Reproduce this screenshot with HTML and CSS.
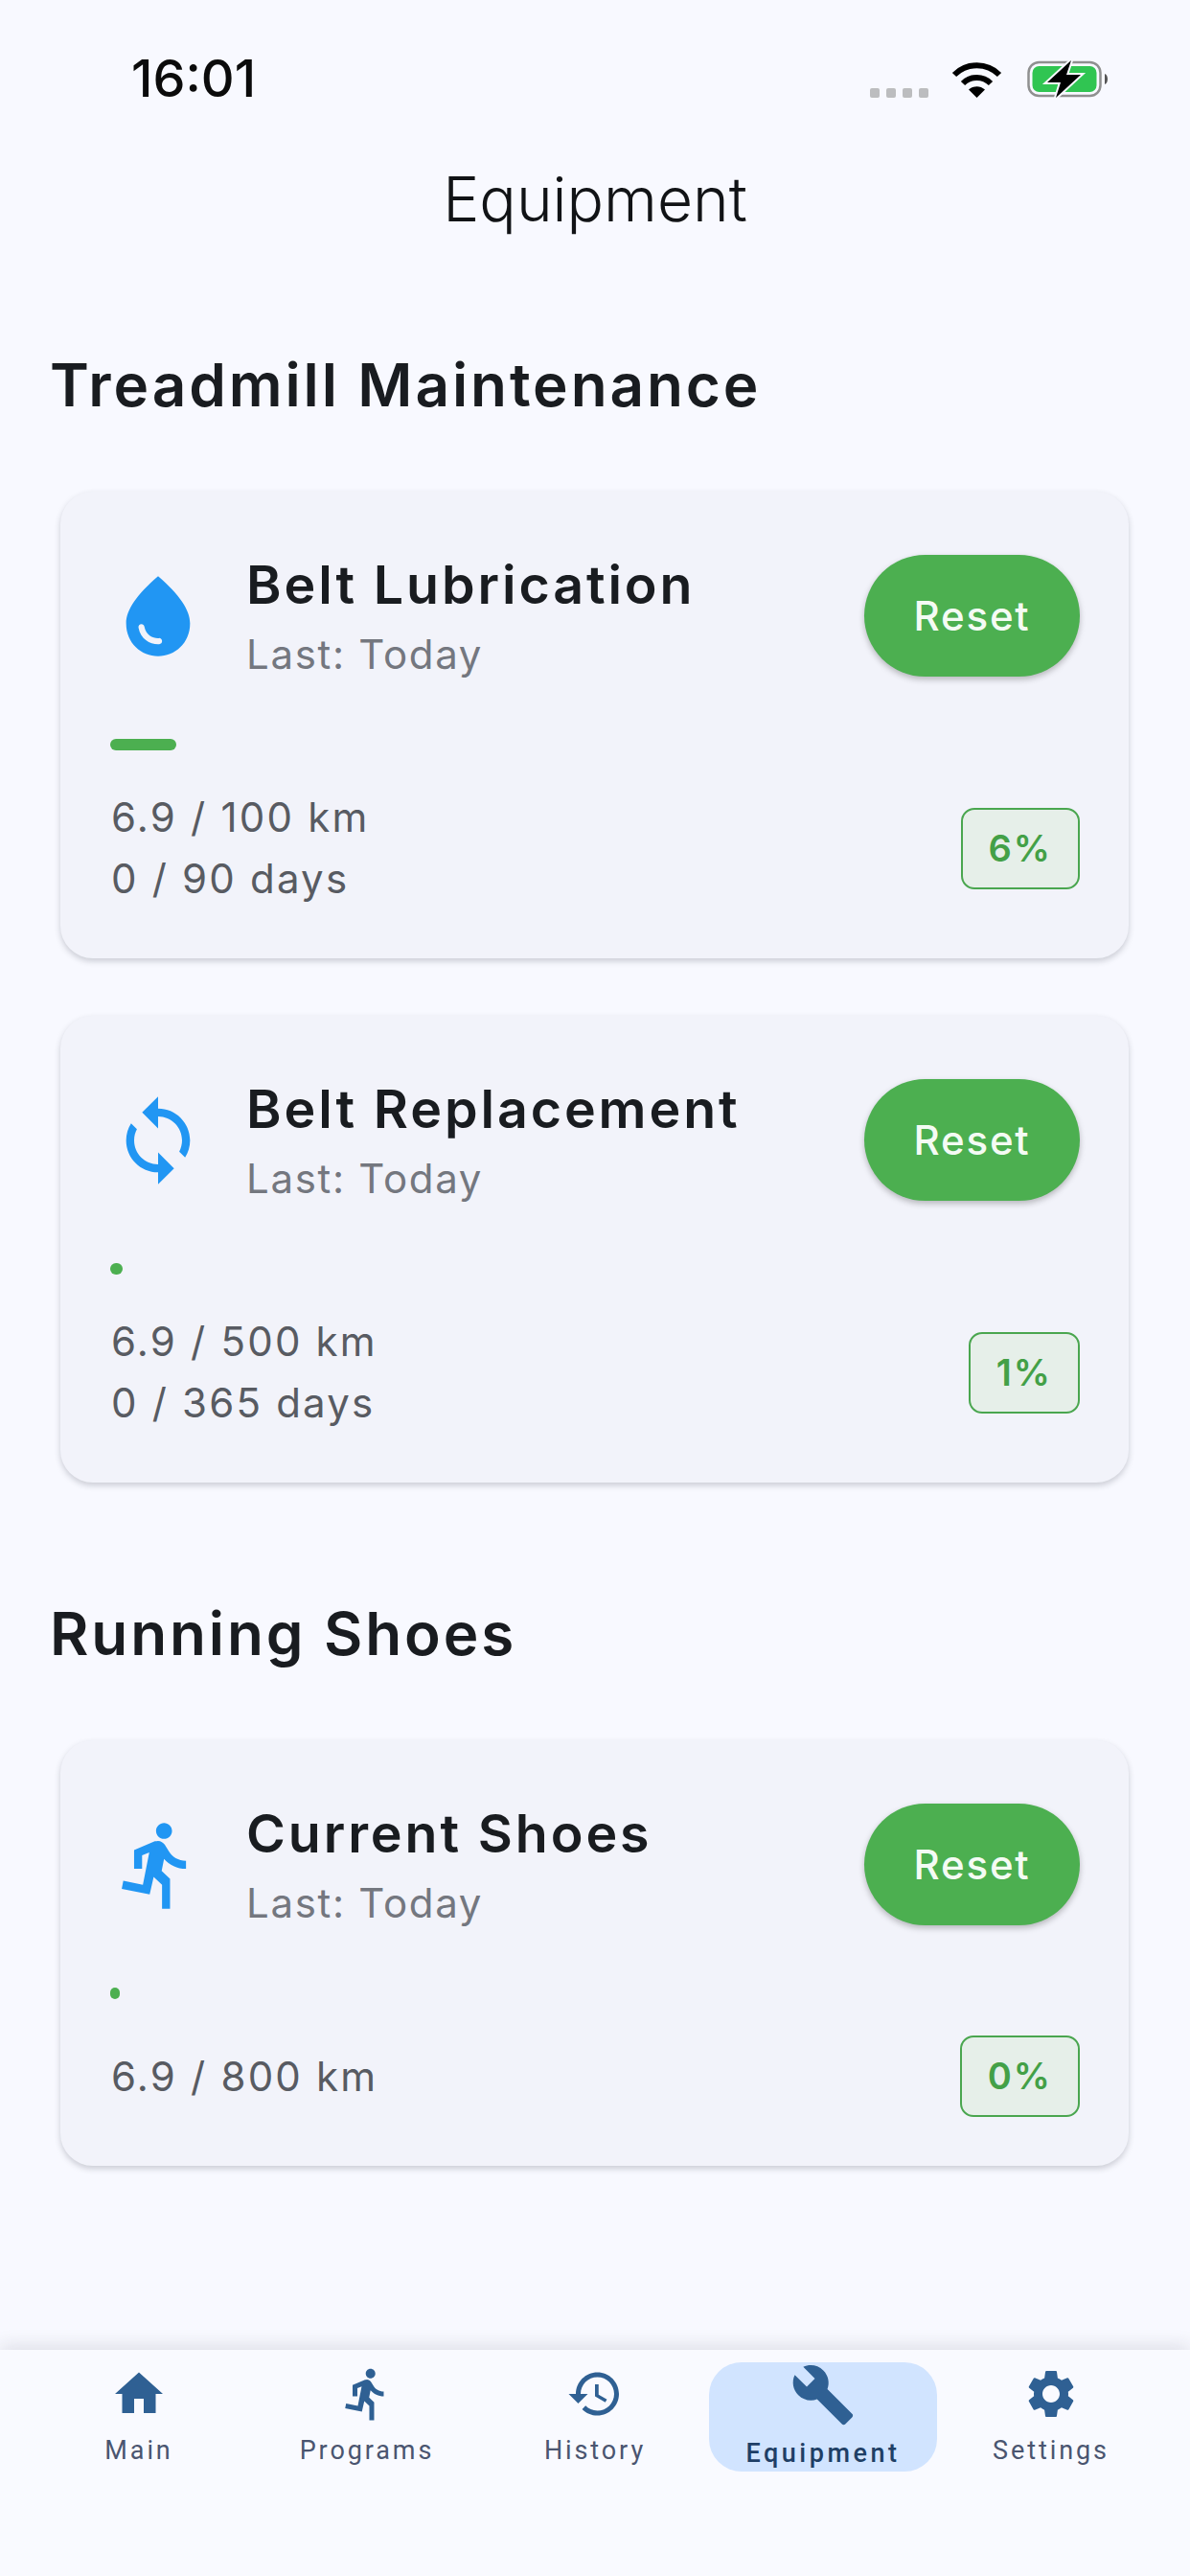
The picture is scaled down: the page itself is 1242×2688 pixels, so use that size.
FILE: index.html
```html
<!DOCTYPE html>
<html lang="en">
<head>
    <meta charset="UTF-8">
    <meta name="viewport" content="width=device-width, initial-scale=1.0">
    <title>Equipment</title>
    <link rel="stylesheet" href="styles.css">
</head>
<body>
    <div class="app">
        <div class="status-bar">
            <span class="status-time">16:01</span>
            <div class="status-icons">
                <div class="signal-dots"><i></i><i></i><i></i><i></i></div>
                <svg class="wifi-icon" viewBox="0 0 53 39">
                    <path d="M3 15C16 2 37 2 50 15" fill="none" stroke="#000" stroke-width="6"/>
                    <path d="M12 24C20 16 33 16 41 24" fill="none" stroke="#000" stroke-width="6"/>
                    <path d="M18 30.500C23 26 30 26 35 30.500L26.500 39z"/>
                </svg>
                <svg class="battery-icon" viewBox="0 0 85 39">
                    <rect x="1.500" y="2" width="75" height="35" rx="11" fill="none" stroke="#8f9090" stroke-width="2.500"/>
                    <rect x="5.500" y="6" width="67" height="27" rx="7" fill="#30c552"/>
                    <path d="M81 14c4 1 4 10 0 11z" fill="#555"/>
                    <path d="M46 0L21 23h14l-5 16 26-24H41z" stroke="#f8f9ff" stroke-width="4" paint-order="stroke"/>
                </svg>
            </div>
        </div>
        <h1 class="app-title">Equipment</h1>

        <main class="content">
            <h2 class="section-title">Treadmill Maintenance</h2>
            <div class="card">
                <div class="card-top">
                    <svg class="card-icon" viewBox="0 0 24 24"><path d="M12 2c-5.330 4.550-8 8.480-8 11.800 0 4.980 3.800 8.200 8 8.200s8-3.220 8-8.200c0-3.320-2.670-7.250-8-11.800zM7.830 14c.37 0 .67.26.74.62.41 2.220 2.280 2.980 3.640 2.870.43-.02.79.32.79.75 0 .4-.32.73-.72.75-2.130.13-4.620-1.090-5.190-4.120-.08-.45.28-.87.74-.87z"/></svg>
                    <div class="card-info">
                        <span class="card-name">Belt Lubrication</span>
                        <span class="card-last">Last: Today</span>
                    </div>
                    <button class="reset-btn">Reset</button>
                </div>
                <div class="progress-fill" style="width: 6.8%"></div>
                <div class="card-bottom">
                    <div class="metrics">
                        <span>6.9 / 100 km</span>
                        <span>0 / 90 days</span>
                    </div>
                    <span class="percent-badge">6%</span>
                </div>
            </div>
            <div class="card">
                <div class="card-top">
                    <svg class="card-icon" viewBox="0 0 24 24"><path d="M12 4V1L8 5l4 4V6c3.310 0 6 2.690 6 6 0 1.010-.25 1.970-.7 2.800l1.460 1.460C19.540 15.030 20 13.570 20 12c0-4.420-3.580-8-8-8zm0 14c-3.310 0-6-2.690-6-6 0-1.010.25-1.970.7-2.800L5.240 7.740C4.460 8.970 4 10.430 4 12c0 4.420 3.580 8 8 8v3l4-4-4-4v3z"/></svg>
                    <div class="card-info">
                        <span class="card-name">Belt Replacement</span>
                        <span class="card-last">Last: Today</span>
                    </div>
                    <button class="reset-btn">Reset</button>
                </div>
                <div class="progress-fill" style="width: 1.3%"></div>
                <div class="card-bottom">
                    <div class="metrics">
                        <span>6.9 / 500 km</span>
                        <span>0 / 365 days</span>
                    </div>
                    <span class="percent-badge">1%</span>
                </div>
            </div>

            <h2 class="section-title spaced">Running Shoes</h2>
            <div class="card">
                <div class="card-top">
                    <svg class="card-icon" viewBox="0 0 24 24"><path d="M13.490 5.480c1.100 0 2-.9 2-2s-.9-2-2-2-2 .9-2 2 .9 2 2 2zm-3.600 13.900l1-4.400 2.100 2v6h2v-7.500l-2.100-2 .6-3c1.300 1.500 3.300 2.500 5.500 2.500v-2c-1.900 0-3.500-1-4.300-2.400l-1-1.600c-.4-.6-1-1-1.700-1-.3 0-.5.1-.8.1l-5.200 2.200v4.700h2v-3.400l1.800-.7-1.600 8.100-4.900-1-.4 2 7 1.400z"/></svg>
                    <div class="card-info">
                        <span class="card-name">Current Shoes</span>
                        <span class="card-last">Last: Today</span>
                    </div>
                    <button class="reset-btn">Reset</button>
                </div>
                <div class="progress-fill" style="width: 0.9%"></div>
                <div class="card-bottom">
                    <div class="metrics">
                        <span>6.9 / 800 km</span>
                    </div>
                    <span class="percent-badge">0%</span>
                </div>
            </div>
        </main>

        <nav class="bottom-nav">
            <div class="nav-item">
                <svg class="nav-icon" viewBox="0 0 24 24"><path d="M10 20v-6h4v6h5v-8h3L12 3 2 12h3v8z"/></svg>
                <span class="nav-label">Main</span>
            </div>
            <div class="nav-item">
                <svg class="nav-icon" viewBox="0 0 24 24"><path d="M13.490 5.480c1.100 0 2-.9 2-2s-.9-2-2-2-2 .9-2 2 .9 2 2 2zm-3.600 13.900l1-4.400 2.100 2v6h2v-7.500l-2.100-2 .6-3c1.300 1.500 3.300 2.500 5.500 2.500v-2c-1.900 0-3.500-1-4.300-2.400l-1-1.600c-.4-.6-1-1-1.700-1-.3 0-.5.1-.8.1l-5.200 2.200v4.700h2v-3.400l1.800-.7-1.600 8.100-4.900-1-.4 2 7 1.400z"/></svg>
                <span class="nav-label">Programs</span>
            </div>
            <div class="nav-item">
                <svg class="nav-icon" viewBox="0 0 24 24"><path d="M13 3c-4.970 0-9 4.030-9 9H1l3.890 3.890.07.14L9 12H6c0-3.870 3.130-7 7-7s7 3.130 7 7-3.130 7-7 7c-1.930 0-3.680-.79-4.940-2.060l-1.420 1.420C8.270 19.990 10.510 21 13 21c4.970 0 9-4.030 9-9s-4.030-9-9-9zm-1 5v5l4.280 2.540.72-1.210-3.500-2.080V8H12z"/></svg>
                <span class="nav-label">History</span>
            </div>
            <div class="nav-item active">
                <svg class="nav-icon" viewBox="0 0 24 24"><path d="M22.700 19l-9.100-9.100c.9-2.300.4-5-1.500-6.900-2-2-5-2.400-7.400-1.300L9 6 6 9 1.600 4.700C.4 7.100.9 10.100 2.900 12.100c1.900 1.900 4.600 2.400 6.900 1.500l9.100 9.100c.4.4 1 .4 1.400 0l2.300-2.300c.5-.4.5-1.100.1-1.400z"/></svg>
                <span class="nav-label">Equipment</span>
            </div>
            <div class="nav-item">
                <svg class="nav-icon" viewBox="0 0 24 24"><path d="M19.140 12.940c.04-.3.06-.61.06-.94 0-.32-.02-.64-.07-.94l2.030-1.580c.18-.14.23-.41.12-.61l-1.920-3.320c-.12-.22-.37-.29-.59-.22l-2.390.96c-.5-.38-1.030-.7-1.620-.94l-.36-2.540c-.04-.24-.24-.41-.48-.41h-3.840c-.24 0-.43.17-.47.41l-.36 2.540c-.59.24-1.130.57-1.620.94l-2.390-.96c-.22-.08-.47 0-.59.22L2.740 8.870c-.12.21-.08.47.12.61l2.030 1.580c-.05.3-.09.63-.09.94s.02.64.07.94l-2.030 1.580c-.18.14-.23.41-.12.61l1.920 3.320c.12.22.37.29.59.22l2.390-.96c.5.38 1.030.7 1.620.94l.36 2.540c.05.24.24.41.48.41h3.840c.24 0 .44-.17.47-.41l.36-2.540c.59-.24 1.130-.56 1.620-.94l2.390.96c.22.08.47 0 .59-.22l1.920-3.320c.12-.22.07-.47-.12-.61l-2.010-1.580zM12 15.600c-1.980 0-3.600-1.620-3.600-3.600s1.620-3.600 3.600-3.600 3.600 1.620 3.600 3.600-1.620 3.600-3.600 3.600z"/></svg>
                <span class="nav-label">Settings</span>
            </div>
        </nav>
    </div>
</body>
</html>
```

FILE: styles.css
```css
body {
    margin: 0;
    background: #f8f9ff;
    color: #191c20;
    font-family: "Inter", "Noto Sans", sans-serif;
}
.app {
    display: flex;
    flex-direction: column;
    width: 1242px;
    height: 2688px;
    overflow: hidden;
}
.status-bar {
    display: flex;
    justify-content: space-between;
    align-items: flex-start;
    height: 130px;
    padding: 56px 85px 0 137px;
    box-sizing: border-box;
}
.status-time {
    font-size: 54px;
    font-weight: 500;
    line-height: 52px;
    color: #0b0b0b;
}
.status-icons {
    display: flex;
    align-items: flex-end;
    gap: 24px;
    margin-top: 7px;
}
.signal-dots {
    display: flex;
    gap: 7px;
}
.signal-dots i {
    width: 10px;
    height: 10px;
    border-radius: 2px;
    background: #bcbdbf;
}
.wifi-icon {
    width: 53px;
    height: 39px;
}
.battery-icon {
    width: 85px;
    height: 39px;
    margin-left: 2px;
}
.app-title {
    margin: 38px 0 0;
    font-size: 64px;
    font-weight: 300;
    line-height: 80px;
    text-align: center;
    color: #111316;
}
.content {
    flex: 1;
    padding: 0 64px 0 52px;
}
.section-title {
    margin: 114px 0 71px;
    font-size: 62px;
    font-weight: 600;
    line-height: 80px;
    letter-spacing: 2.9px;
}
.section-title.spaced {
    margin-top: 118px;
}
.card {
    margin: 0 0 60px 11px;
    padding: 66px 51px 51px 52px;
    background: #f2f3fa;
    border-radius: 34px;
    box-shadow: 0 3px 6px rgba(40, 44, 60, 0.22);
}
.card:last-child {
    margin-bottom: 0;
}
.card-top {
    display: flex;
    align-items: center;
    height: 127px;
    margin-bottom: 65px;
}
.card-icon {
    flex: none;
    width: 100px;
    height: 100px;
    margin-right: 42px;
    fill: #2196f3;
}
.card-info {
    flex: 1;
    display: flex;
    flex-direction: column;
    gap: 20px;
    padding-top: 2px;
}
.card-name {
    font-size: 55.500px;
    font-weight: 600;
    line-height: 58px;
    letter-spacing: 2.9px;
}
.card-last {
    font-size: 42px;
    line-height: 48px;
    letter-spacing: 1.7px;
    color: #74777f;
}
.reset-btn {
    flex: none;
    width: 225px;
    height: 127px;
    padding: 0;
    border: none;
    border-radius: 64px;
    background: #4caf50;
    color: #f4fbf4;
    font-family: inherit;
    font-size: 42px;
    font-weight: 500;
    letter-spacing: 1.8px;
    box-shadow: 0 3px 6px rgba(0, 0, 0, 0.25);
}
.progress-fill {
    height: 12px;
    min-width: 10px;
    border-radius: 6px;
    background: #4caf50;
}
.card-bottom {
    display: flex;
    justify-content: space-between;
    align-items: center;
    margin-top: 38px;
}
.metrics {
    display: flex;
    flex-direction: column;
    padding-left: 1px;
    font-size: 42px;
    line-height: 64px;
    letter-spacing: 2.2px;
    color: #585b62;
}
.percent-badge {
    padding: 0 27px;
    height: 85px;
    box-sizing: border-box;
    border: 2.500px solid #4aa64f;
    border-radius: 14px;
    background: #e6efe9;
    color: #43a047;
    font-size: 38px;
    font-weight: 600;
    line-height: 80px;
    letter-spacing: 2px;
}
.bottom-nav {
    display: grid;
    grid-template-columns: repeat(5, 238px);
    align-items: start;
    height: 236px;
    padding: 13px 26px 0;
    box-sizing: border-box;
    background: #f9faff;
    box-shadow: 0 -4px 18px rgba(30, 34, 50, 0.12);
}
.nav-item {
    display: flex;
    flex-direction: column;
    align-items: center;
    height: 114px;
    color: #4a5570;
}
.nav-icon {
    width: 60px;
    height: 60px;
    margin-top: 3px;
    fill: #2f6093;
}
.nav-label {
    margin-top: 11px;
    font-family: "Roboto", sans-serif;
    font-size: 27px;
    line-height: 36px;
    letter-spacing: 2.9px;
}
.nav-item.active {
    border-radius: 34px;
    background: #d1e4ff;
    color: #1f3f66;
}
.nav-item.active .nav-icon {
    width: 68px;
    height: 68px;
    margin-top: 0;
}
.nav-item.active .nav-label {
    margin-top: 9px;
    font-weight: 500;
    letter-spacing: 3.5px;
}
```
